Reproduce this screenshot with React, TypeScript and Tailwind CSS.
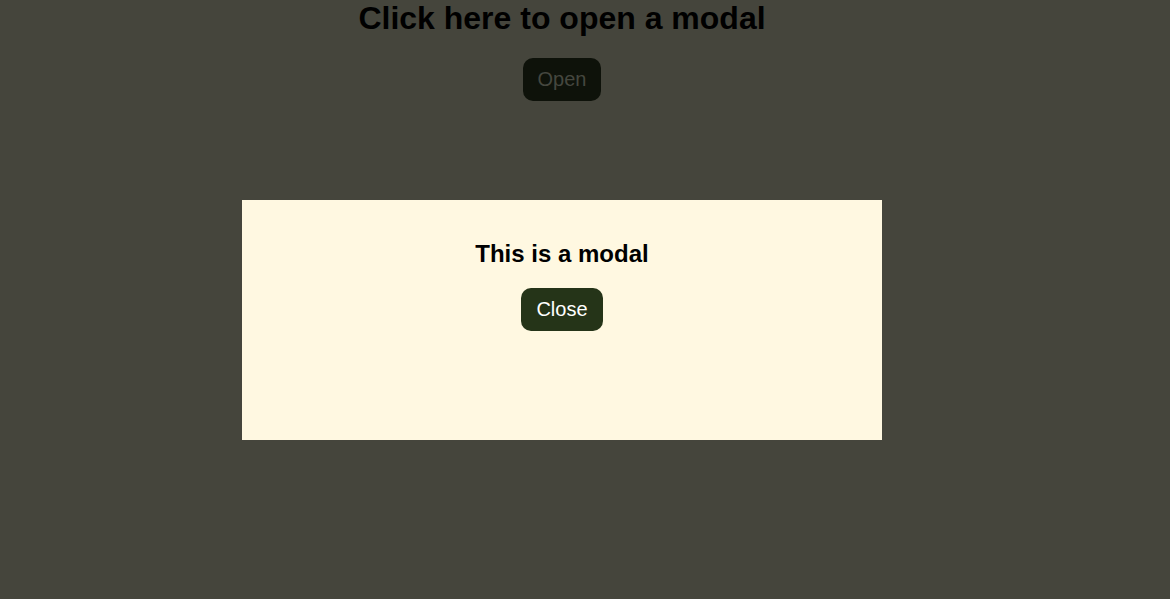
import React from "react";

export default function App() {
  return (
    <div
      className="relative w-full h-[599px] overflow-hidden bg-[#45453c] text-center"
      style={{ fontFamily: '"Liberation Sans", Arial, sans-serif' }}
    >
      <div className="w-[1124px] flex flex-col items-center">
        <h1 className="m-0 text-[32px] leading-[normal] font-bold text-black">
          Click here to open a modal
        </h1>
        <button className="mt-[21px] px-[15px] py-[10px] text-[20px] leading-[normal] rounded-[10px] bg-[#0e120a] text-[#45473f]">
          Open
        </button>
      </div>
      <div className="absolute left-[242px] top-[200px] w-[640px] h-[240px] bg-[#fff8e1] pt-[20px] flex flex-col items-center">
        <h2 className="mt-[20px] mb-[20px] text-[24px] leading-[normal] font-bold text-black">
          This is a modal
        </h2>
        <button className="px-[15px] py-[10px] text-[20px] leading-[normal] rounded-[10px] bg-[#253418] text-white">
          Close
        </button>
      </div>
    </div>
  );
}
